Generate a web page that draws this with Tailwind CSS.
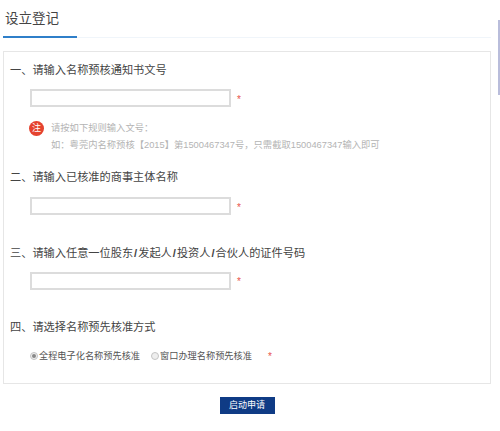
<!DOCTYPE html>
<html lang="zh-CN">
<head>
    <meta charset="UTF-8">
    <title>设立登记</title>
    <script src="https://cdn.jsdelivr.net/npm/@tailwindcss/browser@4"></script>
</head>
<body class="bg-white h-[431px] overflow-hidden relative font-['Liberation_Sans','Noto_Sans_CJK_SC',sans-serif] text-[#444]">
    <!-- scrollbar -->
    <div class="absolute right-0 top-[20px] w-[2px] h-[75px] bg-[#b9bddb]"></div>

    <div class="ml-[3px] w-[488px]">
        <div class="border-b border-[#f0f5fa] h-[38px]">
            <div class="w-[74px] h-[38px] border-b-2 border-[#2f7fc9] pl-[2px] pt-[10px] text-[13.5px] leading-[18px]">设立登记</div>
        </div>

        <div class="mt-[13px] h-[333px] border border-[#e6e6e6] pl-[6px] pt-[9px]">
            <h2 class="text-[11.2px] leading-[18px] font-normal">一、请输入名称预核通知书文号</h2>
            <div class="flex items-center ml-[20px] mt-[10px]">
                <input type="text" class="w-[201px] h-[18px] border-2 border-[#dcdcdc] bg-white">
                <span class="ml-[6px] pt-[3px] text-[10px] text-[#e8534a]">*</span>
            </div>
            <div class="flex ml-[19px] mt-[14px]">
                <div class="w-[15px] h-[15px] rounded-full bg-[#e5432f] text-white text-[9px] leading-[15px] text-center">注</div>
                <div class="ml-[7px] text-[9.3px] leading-[17px] text-[#b4b4b4] -mt-[1px]">
                    <p>请按如下规则输入文号：</p>
                    <p>如：粤莞内名称预核【2015】第1500467347号，只需截取1500467347输入即可</p>
                </div>
            </div>

            <h2 class="text-[11.2px] leading-[18px] font-normal mt-[14px]">二、请输入已核准的商事主体名称</h2>
            <div class="flex items-center ml-[20px] mt-[11px]">
                <input type="text" class="w-[201px] h-[18px] border-2 border-[#dcdcdc] bg-white">
                <span class="ml-[6px] pt-[2px] text-[10px] text-[#e8534a]">*</span>
            </div>

            <h2 class="text-[11.2px] leading-[18px] font-normal mt-[29px]">三、请输入任意一位股东<b class="mx-[1px]">/</b>发起人<b class="mx-[1px]">/</b>投资人<b class="mx-[1px]">/</b>合伙人的证件号码</h2>
            <div class="flex items-center ml-[20px] mt-[10px]">
                <input type="text" class="w-[201px] h-[18px] border-2 border-[#dcdcdc] bg-white">
                <span class="ml-[6px] text-[10px] text-[#e8534a]">*</span>
            </div>

            <h2 class="text-[11.2px] leading-[18px] font-normal mt-[28px]">四、请选择名称预先核准方式</h2>
            <div class="flex items-center ml-[20px] mt-[9px] text-[9.2px] leading-[18px] text-[#555]">
                <span class="flex items-center justify-center w-[8px] h-[8px] rounded-full border border-[#c4c4c4] bg-[#eee]">
                    <span class="w-[4px] h-[4px] rounded-full bg-[#888]"></span>
                </span>
                <span class="ml-[1px]">全程电子化名称预先核准</span>
                <span class="ml-[11px] w-[8px] h-[8px] rounded-full border border-[#c4c4c4] bg-[#eee]"></span>
                <span class="ml-[1px]">窗口办理名称预先核准</span>
                <span class="ml-[16px] pt-[3px] text-[10px] text-[#e8534a]">*</span>
            </div>
        </div>

        <div class="flex justify-center mt-[13px]">
            <button class="w-[55px] h-[17px] bg-[#0f3b85] text-white text-[9px] leading-[17px]">启动申请</button>
        </div>
    </div>
</body>
</html>
